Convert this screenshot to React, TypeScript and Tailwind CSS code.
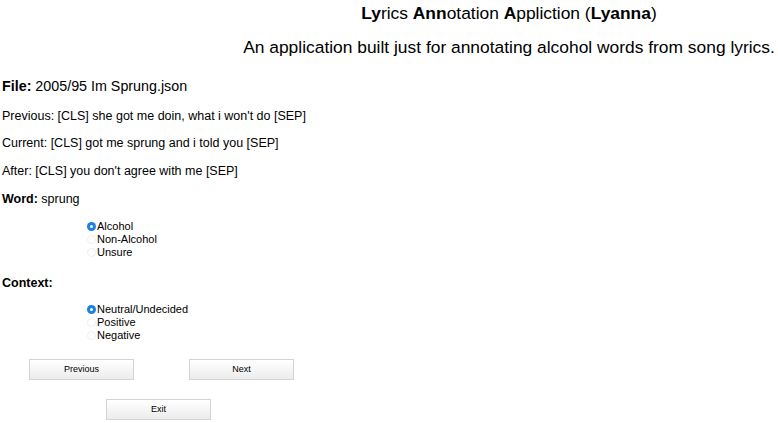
import React, { useState } from 'react';

const font = { fontFamily: '"Liberation Sans", Arial, sans-serif' };

interface RadioGroupProps {
    options: string[];
    value: string;
    onChange: (v: string) => void;
}

const RadioGroup: React.FC<RadioGroupProps> = ({ options, value, onChange }) => {
    return (
        <div className="pl-[87px] flex flex-col">
            {options.map((opt) => {
                const checked = opt === value;
                return (
                    <label key={opt} className="flex items-center h-[13px] text-[11px] leading-[13px] text-black cursor-pointer" onClick={() => onChange(opt)}>
                        {checked ? (
                            <span className="w-[9px] h-[9px] rounded-full bg-[#1a82e2] flex items-center justify-center mr-[1px]">
                                <span className="w-[3px] h-[3px] rounded-full bg-white"></span>
                            </span>
                        ) : (
                            <span className="w-[9px] h-[9px] rounded-full border border-[#f0f0f0] bg-white mr-[1px]"></span>
                        )}
                        {opt}
                    </label>
                );
            })}
        </div>
    );
};

const Btn: React.FC<{ label: string; className?: string }> = ({ label, className }) => (
    <button className={`w-[105px] h-[21px] border border-[#d4d4d4] bg-gradient-to-b from-white to-[#ececec] text-[9px] text-black ${className || ''}`}>
        {label}
    </button>
);

export default function App() {
    const [word, setWord] = useState('Alcohol');
    const [context, setContext] = useState('Neutral/Undecided');

    return (
        <div className="w-[778px] h-[423px] bg-white text-black overflow-hidden" style={font}>
            <div className="pl-[240px] text-center whitespace-nowrap">
                <h1 className="text-[17.4px] leading-[22px] pt-[2px] font-normal">
                    <b>Ly</b>rics <b>Ann</b>otation <b>A</b>ppliction (<b>Lyanna</b>)
                </h1>
                <p className="text-[17.4px] leading-[22px] mt-[12px]">
                    An application built just for annotating alcohol words from song lyrics.
                </p>
            </div>

            <div className="pl-[2px] mt-[19px]">
                <div className="text-[14.3px] leading-[18px]"><b>File:</b> 2005/95 Im Sprung.json</div>
                <div className="text-[12.5px] leading-[16px] mt-[13px]">Previous: [CLS] she got me doin, what i won't do [SEP]</div>
                <div className="text-[12.5px] leading-[16px] mt-[11px]">Current: [CLS] got me sprung and i told you [SEP]</div>
                <div className="text-[12.5px] leading-[16px] mt-[12px]">After: [CLS] you don't agree with me [SEP]</div>
                <div className="text-[12.5px] leading-[16px] mt-[12px]"><b>Word:</b> sprung</div>
            </div>

            <div className="mt-[13px]">
                <RadioGroup options={['Alcohol', 'Non-Alcohol', 'Unsure']} value={word} onChange={setWord} />
            </div>

            <div className="pl-[2px] mt-[16px] text-[12.5px] leading-[16px]"><b>Context:</b></div>

            <div className="mt-[12px]">
                <RadioGroup options={['Neutral/Undecided', 'Positive', 'Negative']} value={context} onChange={setContext} />
            </div>

            <div className="flex pl-[29px] gap-[55px] mt-[17px]">
                <Btn label="Previous" />
                <Btn label="Next" />
            </div>
            <div className="pl-[106px] mt-[15px]">
                <Btn label="Exit" />
            </div>
        </div>
    );
}
